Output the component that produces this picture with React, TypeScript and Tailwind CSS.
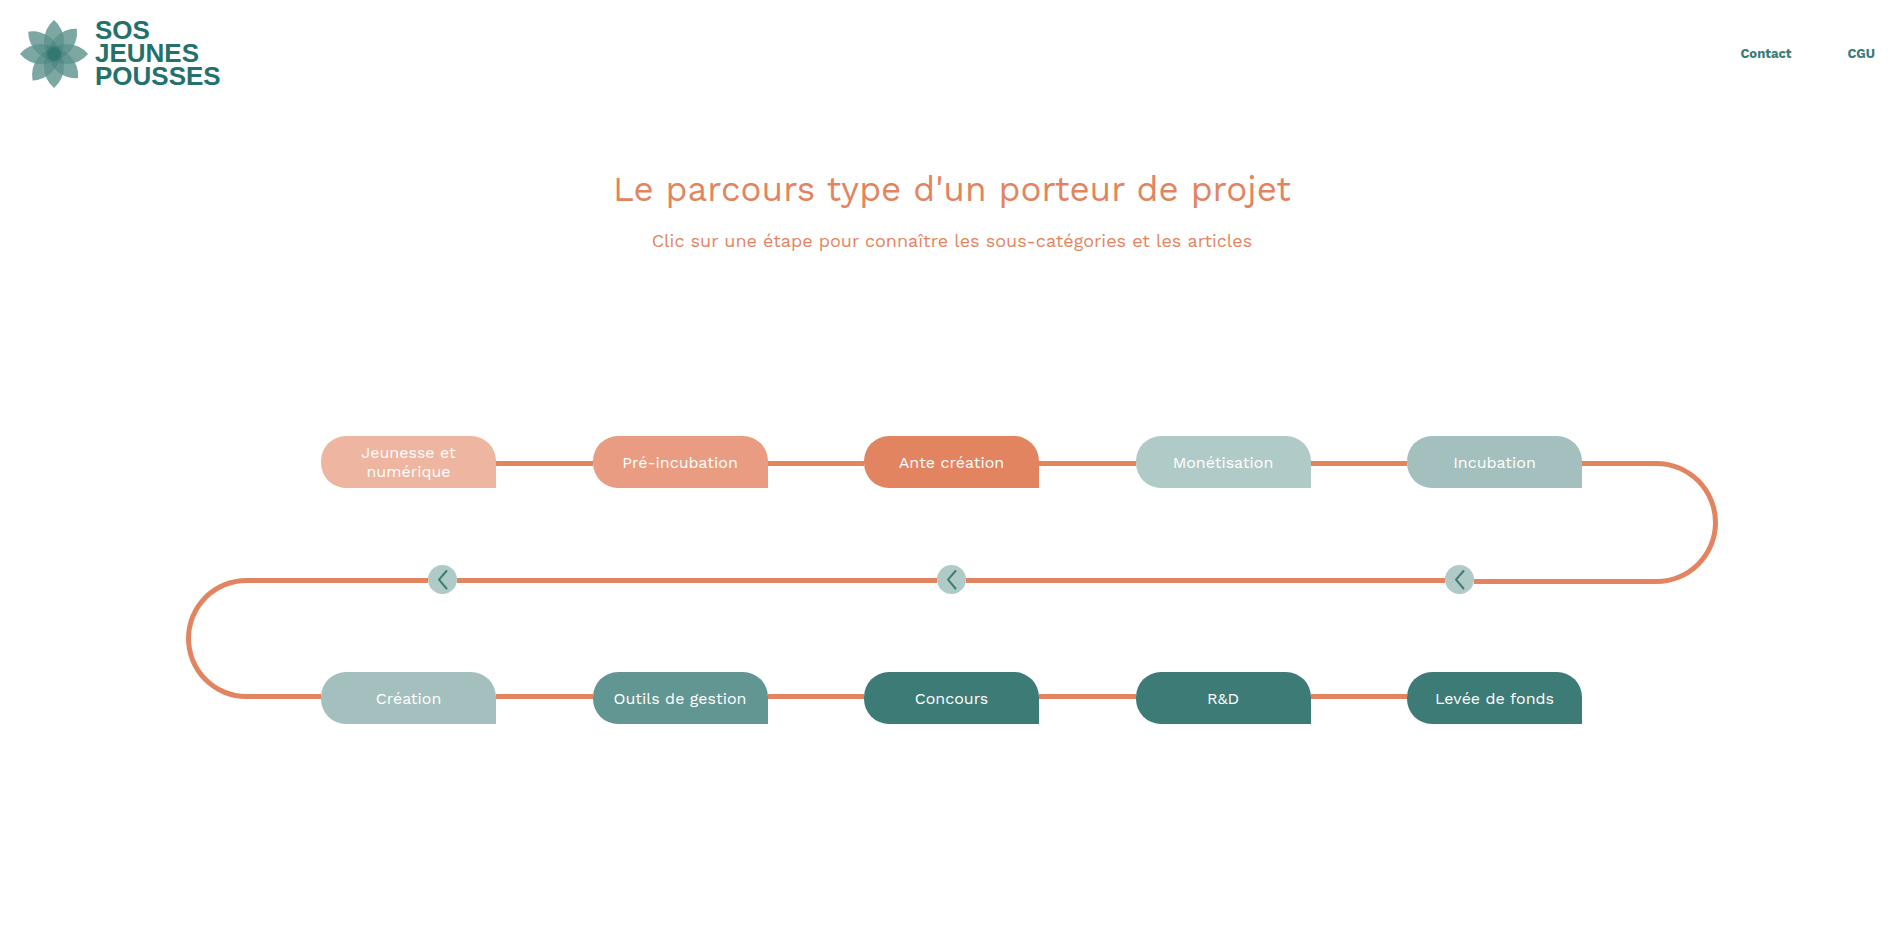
import React from "react";

type Step = { label: string; color: string };

const firstSteps: Step[] = [
  { label: "Jeunesse et numérique", color: "bg-[#eeb5a0]" },
  { label: "Pré-incubation", color: "bg-[#e99c81]" },
  { label: "Ante création", color: "bg-[#e38460]" },
  { label: "Monétisation", color: "bg-[#b0cac7]" },
  { label: "Incubation", color: "bg-[#a4c0be]" },
];

const lastSteps: Step[] = [
  { label: "Création", color: "bg-[#a4c0be]" },
  { label: "Outils de gestion", color: "bg-[#629692]" },
  { label: "Concours", color: "bg-[#3d7c76]" },
  { label: "R&D", color: "bg-[#3d7c76]" },
  { label: "Levée de fonds", color: "bg-[#3d7c76]" },
];

const petalAngles = [0, 42, 90, 135, 180, 219, 270, 311];
const petal = "M0 9A28 28 0 0 1 0 -34A28 28 0 0 1 0 9Z";

function Flower() {
  return (
    <svg viewBox="-34 -34 68 68" className="size-[68px]" aria-hidden="true">
      <g fill="#9ebdba">
        {petalAngles.map((angle) => (
          <path key={angle} d={petal} transform={`rotate(${angle})`} />
        ))}
      </g>
      <g fill="#2d736e" fillOpacity={0.3}>
        {petalAngles.map((angle) => (
          <path key={angle} d={petal} transform={`rotate(${angle})`} />
        ))}
      </g>
    </svg>
  );
}

function StepRow({ steps, lineClass, className }: { steps: Step[]; lineClass: string; className: string }) {
  return (
    <div className={`flex items-start ${className}`}>
      {steps.map((step, i) => (
        <React.Fragment key={step.label}>
          {i > 0 && <div className={`h-[5px] flex-1 bg-[#e38460] ${lineClass}`} />}
          <button
            type="button"
            className={`flex h-[52px] w-[175px] items-center justify-center rounded-[25px] rounded-br-none px-5 text-center text-base leading-[19px] text-white ${step.color}`}
          >
            {step.label}
          </button>
        </React.Fragment>
      ))}
    </div>
  );
}

function Arrow() {
  return (
    <svg viewBox="0 0 29 29" className="size-[29px]" aria-hidden="true">
      <circle cx="14.5" cy="14.5" r="14.5" fill="#b0cac7" />
      <path
        d="M18.5 6L11 14.7L18.5 23.5"
        fill="none"
        stroke="#3d7c76"
        strokeWidth="2"
        strokeLinecap="round"
        strokeLinejoin="round"
      />
    </svg>
  );
}

export default function App() {
  return (
    <div className="font-['Work_Sans','Inter',sans-serif]">
      <header className="flex items-center justify-between py-[19px] pr-[25px] pl-5 text-[#24716b]">
        <a href="#" className="flex items-center gap-[7px]">
          <Flower />
          <span className="flex flex-col font-['Liberation_Sans',sans-serif] text-[26px] leading-[23px] font-bold">
            <span>SOS</span>
            <span>JEUNES</span>
            <span>POUSSES</span>
          </span>
        </a>
        <nav className="flex gap-14 text-[13px] font-bold text-[#3d7c76]">
          <a href="#contact">Contact</a>
          <a href="#cgu">CGU</a>
        </nav>
      </header>
      <main className="flex flex-col items-center pt-[59px] pl-1">
        <h1 className="text-center text-[35px] leading-[46px] text-[#e38460]">
          Le parcours type d'un porteur de projet
        </h1>
        <p className="mt-[17px] text-center text-lg leading-6 text-[#e38460]">
          Clic sur une étape pour connaître les sous-catégories et les articles
        </p>
        <div className="mt-[183px] grid w-full max-w-[1532px] grid-cols-[135px_1fr_136px]">
          <StepRow steps={firstSteps} lineClass="mt-[25px]" className="col-start-2 row-start-1 pb-[77px]" />
          <div className="col-start-3 row-span-2 row-start-1 mt-[25px] h-[123px] rounded-r-full border-[5px] border-l-0 border-[#e38460]" />
          <div className="col-start-1 row-span-2 row-start-2 mt-[13px] h-[121px] rounded-l-full border-[5px] border-r-0 border-[#e38460]" />
          <div className="col-start-2 row-start-2 flex items-start pb-[78px]">
            <div className="mt-[13px] h-[5px] w-[107px] bg-[#e38460]" />
            <Arrow />
            <div className="mt-[13px] h-[5px] flex-1 bg-[#e38460]" />
            <Arrow />
            <div className="mt-[13px] h-[5px] flex-1 bg-[#e38460]" />
            <Arrow />
            <div className="mt-[14px] h-[5px] w-[108px] bg-[#e38460]" />
          </div>
          <StepRow steps={lastSteps} lineClass="mt-[22px]" className="col-start-2 row-start-3" />
        </div>
      </main>
    </div>
  );
}
